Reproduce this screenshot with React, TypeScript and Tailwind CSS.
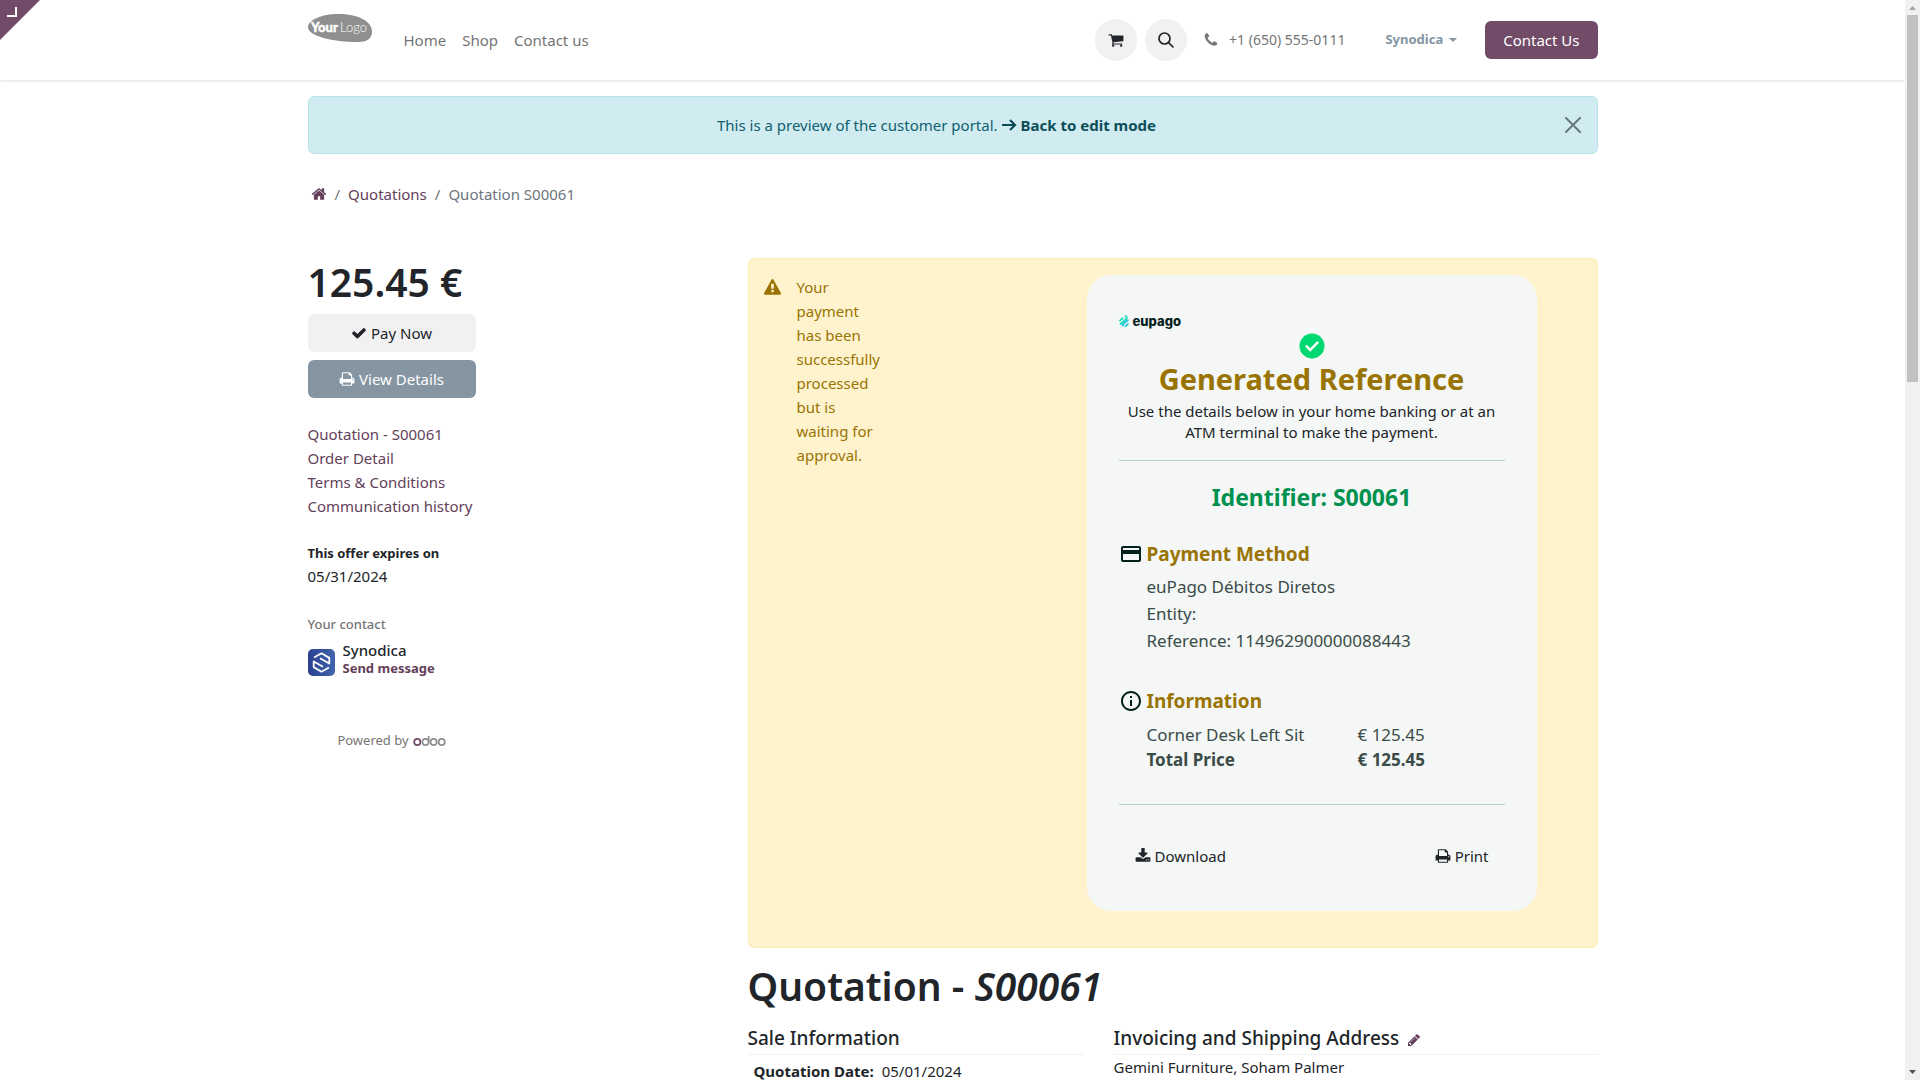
import type { ReactNode } from 'react';
import clsx from 'clsx';

// 1792-unit glyph outlines, Font Awesome 4 grid
const glyphs = {
  cart: 'M704 1536q0 52-38 90t-90 38-90-38-38-90 38-90 90-38 90 38 38 90zm896 0q0 52-38 90t-90 38-90-38-38-90 38-90 90-38 90 38 38 90zm128-1088v512q0 24-16.5 42.5t-40.5 21.5l-1044 122q13 60 13 70 0 16-24 64h920q26 0 45 19t19 45-19 45-45 19h-1024q-26 0-45-19t-19-45q0-11 8-31.5t16-36 21.5-40 15.5-29.5l-177-823h-204q-26 0-45-19t-19-45 19-45 45-19h256q16 0 28.5 6.5t19.5 15.5 13 24.5 8 26 5.5 29.5 4.5 26h1201q26 0 45 19t19 45z',
  phone: 'M1600 1240q0 27-10 70.5t-21 68.5q-21 50-122 106-94 51-186 51-27 0-53-3.5t-57.5-12.5-47-14.5-55.5-20.5-49-18q-98-35-175-83-127-79-264-216t-216-264q-48-77-83-175-3-9-18-49t-20.5-55.5-14.5-47-12.5-57.5-3.5-53q0-92 51-186 56-101 106-122 25-11 68.5-21t70.5-10q14 0 21 3 18 6 53 76 11 19 30 54t35 63.5 31 53.5q3 4 17.5 25t21.5 35.5 7 28.5q0 20-28.5 50t-62 55-62 53-28.5 46q0 9 5 22.5t8.5 20.5 14 24 11.5 19q76 137 174 235t235 174q2 1 19 11.5t24 14 20.5 8.5 22.5 5q18 0 46-28.5t53-62 55-62 50-28.5q14 0 28.5 7t35.5 21.5 25 17.5q25 15 53.5 31t63.5 35 54 30q70 35 76 53 3 7 3 21z',
  home: 'M1472 992v480q0 26-19 45t-45 19h-384v-384h-256v384h-384q-26 0-45-19t-19-45v-480q0-1 .5-3t.5-3l575-474 575 474q1 2 1 6zm223-69l-62 74q-8 9-21 11h-3q-13 0-21-7l-692-577-692 577q-12 8-24 7-13-2-21-11l-62-74q-8-10-7-23.5t11-21.5l719-599q32-26 76-26t76 26l244 204v-195q0-14 9-23t23-9h192q14 0 23 9t9 23v408l219 182q10 8 11 21.5t-7 23.5z',
  print: 'M448 1536h896v-256h-896v256zm0-640h896v-384h-160q-40 0-68-28t-28-68v-160h-640v640zm1152 64q0-26-19-45t-45-19-45 19-19 45 19 45 45 19 45-19 19-45zm128 0v416q0 13-9.5 22.5t-22.5 9.5h-224v160q0 40-28 68t-68 28h-960q-40 0-68-28t-28-68v-160h-224q-13 0-22.5-9.5t-9.5-22.5v-416q0-79 56.5-135.5t135.5-56.5h64v-544q0-40 28-68t68-28h672q40 0 88 20t76 48l152 152q28 28 48 76t20 88v256h64q79 0 135.5 56.5t56.5 135.5z',
  download: 'M1344 1344q0-26-19-45t-45-19-45 19-19 45 19 45 45 19 45-19 19-45zm256 0q0-26-19-45t-45-19-45 19-19 45 19 45 45 19 45-19 19-45zm128-224v320q0 40-28 68t-68 28h-1472q-40 0-68-28t-28-68v-320q0-40 28-68t68-28h465l135 136q58 56 136 56t136-56l136-136h464q40 0 68 28t28 68zm-325-569q17 41-14 70l-448 448q-18 19-45 19t-45-19l-448-448q-31-29-14-70 17-39 59-39h256v-448q0-26 19-45t45-19h256q26 0 45 19t19 45v448h256q42 0 59 39z',
  warning: 'M1024 1375v-190q0-14-9.5-23.5t-22.5-9.5h-192q-13 0-22.5 9.5t-9.5 23.5v190q0 14 9.5 23.5t22.5 9.5h192q13 0 22.5-9.5t9.5-23.5zm-2-374l18-459q0-12-10-19-13-11-24-11h-220q-11 0-24 11-10 7-10 21l17 457q0 10 10 16.5t24 6.5h185q14 0 23.5-6.5t10.5-16.5zm-14-934l768 1408q35 63-2 126-17 29-46.5 46t-63.5 17h-1536q-34 0-63.5-17t-46.5-46q-37-63-2-126l768-1408q17-31 47-49t65-18 65 18 47 49z',
  check: 'M1671 566q0 40-28 68l-724 724-136 136q-28 28-68 28t-68-28l-136-136-362-362q-28-28-28-68t28-68l136-136q28-28 68-28t68 28l294 295 656-657q28-28 68-28t68 28l136 136q28 28 28 68z',
  pencil: 'M491 1536l91-91-235-235-91 91v107h128v128h107zm523-928q0-22-22-22-10 0-17 7l-542 542q-7 7-7 17 0 22 22 22 10 0 17-7l542-542q7-7 7-17zm-54-192l416 416-832 832h-416v-416zm683 96q0 53-37 90l-166 166-416-416 166-165q36-38 90-38 53 0 91 38l235 234q37 39 37 91z',
};

function Glyph({ name, className = 'h-4 w-4' }: { name: keyof typeof glyphs; className?: string }) {
  return (
    <svg viewBox="0 0 1792 1792" fill="currentColor" aria-hidden="true" className={clsx('shrink-0', className)}>
      <path d={glyphs[name]} />
    </svg>
  );
}

const navLinks = ['Home', 'Shop', 'Contact us'];
const sideLinks = ['Quotation - S00061', 'Order Detail', 'Terms & Conditions', 'Communication history'];

function BrandLogo() {
  return (
    <svg viewBox="0 0 64 28" className="h-7 w-16" role="img" aria-label="Your Logo">
      <path d="M0 13C0 6 14 0 30 0c20 0 34 7 34 18 0 7-6 10-14 10C24 28 0 22 0 13z" fill="#8f8f8f" />
      <text x="3" y="18" fill="#fff" stroke="#fff" strokeWidth="0.4" fontSize="13" fontWeight="900" fontFamily="Lato, sans-serif">
        Your
      </text>
      <text x="32" y="18" fill="#fff" fontSize="13" fontWeight="300" fontFamily="Lato, sans-serif">
        Logo
      </text>
    </svg>
  );
}

function Header() {
  return (
    <header className="relative z-10 bg-white shadow-[0_1px_3px_rgba(0,0,0,0.12)]">
      <div className="mx-auto flex h-20 max-w-[1320px] items-center px-[15px]">
        <a href="#" className="mt-3.5 mr-8 self-start">
          <BrandLogo />
        </a>
        <nav className="flex gap-4 text-[15px] text-[#757575]">
          {navLinks.map((label) => (
            <a key={label} href="#">
              {label}
            </a>
          ))}
        </nav>
        <div className="ml-auto flex items-center">
          <button aria-label="Cart" className="mr-2 grid h-[42px] w-[42px] place-items-center rounded-full bg-[#f1f1f1] text-[#212529]">
            <Glyph name="cart" />
          </button>
          <button aria-label="Search" className="mr-4 grid h-[42px] w-[42px] place-items-center rounded-full bg-[#f1f1f1] text-[#212529]">
            <svg viewBox="0 0 16 16" className="h-4 w-4" fill="none" stroke="currentColor" strokeWidth="1.7" strokeLinecap="round">
              <circle cx="6.5" cy="6.5" r="5.5" />
              <path d="M10.6 10.6L15 15" />
            </svg>
          </button>
          <a href="#" className="mr-10 flex items-center gap-2.5 text-sm text-[#757575]">
            <Glyph name="phone" />
            +1 (650) 555-0111
          </a>
          <button className="mr-7 flex items-center gap-1.5 text-[13px] font-bold text-[#8595a2]">
            Synodica
            <svg viewBox="0 0 8 4" className="h-1 w-2" fill="currentColor">
              <path d="M0 0h8L4 4z" />
            </svg>
          </button>
          <button className="h-[38px] rounded-md bg-[#714b67] px-[18px] text-[15px] text-white">Contact Us</button>
        </div>
      </div>
    </header>
  );
}

function PreviewBar() {
  return (
    <div className="mt-4 flex h-[58px] items-center justify-center rounded-md border border-[#b9e3ea] bg-[#d1ecf1] px-4 text-[15px] text-[#0e616e]">
      <span className="ml-auto">This is a preview of the customer portal.</span>
      <a href="#" className="ml-1 flex items-center gap-1 font-bold text-[#0b4e58]">
        <svg viewBox="0 0 15 14" className="h-[14px] w-[15px]" fill="none" stroke="currentColor" strokeWidth="2.2">
          <path d="M0 7h13M8 2l5 5-5 5" />
        </svg>
        Back to edit mode
      </a>
      <button aria-label="Close" className="ml-auto flex w-8 justify-end text-[#68777a]">
        <svg viewBox="0 0 16 16" className="h-4 w-4" fill="none" stroke="currentColor" strokeWidth="2" strokeLinecap="round">
          <path d="M1 1l14 14M15 1L1 15" />
        </svg>
      </button>
    </div>
  );
}

function Breadcrumb() {
  return (
    <nav aria-label="Breadcrumb" className="mt-7 flex h-6 items-center gap-2 text-[15px] text-[#6c757d]">
      <a href="#" aria-label="Home" className="ml-[3px] text-[#633f5a]">
        <Glyph name="home" />
      </a>
      <span>/</span>
      <a href="#" className="text-[#633f5a]">
        Quotations
      </a>
      <span>/</span>
      <span>Quotation S00061</span>
    </nav>
  );
}

function ContactAvatar() {
  return (
    <svg viewBox="0 0 27 27" className="h-[27px] w-[27px] shrink-0" aria-hidden="true">
      <defs>
        <linearGradient id="avatar" x1="0" x2="1">
          <stop offset="0" stopColor="#2a418f" />
          <stop offset="1" stopColor="#4364ad" />
        </linearGradient>
      </defs>
      <rect width="27" height="27" rx="5" fill="url(#avatar)" />
      <g fill="none" stroke="#fff" strokeWidth="1.8" strokeLinejoin="round">
        <path d="M6 8.500l7.500-4.200 7.800 4.600v5.600l-9.300-5.200" />
        <path d="M21 18.500l-7.500 4.200-7.800-4.600v-5.600l9.300 5.200" />
      </g>
    </svg>
  );
}

function Sidebar() {
  return (
    <aside className="w-[168px] shrink-0 text-[15px] text-[#212529]">
      <h2 className="text-[39px] leading-[48px] font-semibold whitespace-nowrap">125.45 €</h2>
      <button className="mt-2 flex h-[38px] w-full items-center justify-center gap-1 rounded-md bg-[#f1f1f1]">
        <Glyph name="check" />
        Pay Now
      </button>
      <button className="mt-2 flex h-[38px] w-full items-center justify-center gap-1 rounded-md bg-[#8595a2] text-white">
        <Glyph name="print" />
        View Details
      </button>
      <ul className="mt-6 leading-6 whitespace-nowrap text-[#633f5a]">
        {sideLinks.map((label) => (
          <li key={label}>
            <a href="#">{label}</a>
          </li>
        ))}
      </ul>
      <div className="mt-6 leading-6">
        <p className="text-[13px] leading-[22px] font-bold">This offer expires on</p>
        <p>05/31/2024</p>
      </div>
      <p className="mt-6 text-[13px] leading-6 font-medium text-[#757575]">Your contact</p>
      <div className="mt-1 flex items-end gap-2">
        <ContactAvatar />
        <div>
          <p className="leading-5 font-medium">Synodica</p>
          <a href="#" className="block text-[13px] leading-4 font-bold text-[#633f5a]">
            Send message
          </a>
        </div>
      </div>
      <p className="mt-[52px] flex items-center justify-center gap-1 text-[13px] leading-6 text-[#757575]">
        Powered by
        <svg viewBox="0 0 33 11" className="h-[11px] w-[33px]" fill="none" stroke="#8f8f8f" strokeWidth="1.7" role="img" aria-label="odoo">
          <circle cx="4.3" cy="7" r="3.100" stroke="#714b67" />
          <circle cx="12.500" cy="7" r="3.100" />
          <path d="M15.700 7V1" />
          <circle cx="20.600" cy="7" r="3.100" />
          <circle cx="28.700" cy="7" r="3.100" />
        </svg>
      </p>
    </aside>
  );
}

function SectionTitle({ icon, children }: { icon: ReactNode; children: ReactNode }) {
  return (
    <h3 className="flex items-center gap-1 text-[19px] leading-[26px] font-bold text-[#997404]">
      <svg viewBox="0 0 24 24" className="h-6 w-6 fill-[#04201c]" aria-hidden="true">
        {icon}
      </svg>
      {children}
    </h3>
  );
}

function PaymentCard() {
  return (
    <section className="mt-4 mr-[60px] mb-9 w-[450px] rounded-3xl bg-[#f4f7f6] px-8 py-9 text-[#212529]">
      <div className="flex h-5 items-center gap-1">
        <svg viewBox="0 0 10 12" className="h-3 w-[10px]" fill="none" stroke="#1fdcc0" strokeWidth="1.9" strokeLinecap="round">
          <path d="M1 5.6l2.6-2.4M1.6 9l5.6-5.1Q8.6 2.4 6.6 1" />
          <path d="M4 10.6q-1-.6.6-2L8.800 5.200M6.700 11l2.200-1.900" stroke="#26c6da" />
        </svg>
        <span className="font-['Inter',sans-serif] text-[13px] leading-5 font-extrabold text-[#04201c]">eupago</span>
      </div>
      <svg viewBox="0 0 24 24" className="mx-auto h-[30px] w-[30px]" aria-hidden="true">
        <circle cx="12" cy="12" r="10" fill="#00d872" />
        <path d="M7.700 12.300l2.900 2.900 5.800-5.900" fill="none" stroke="#fff" strokeWidth="2" strokeLinecap="round" />
      </svg>
      <h2 className="text-center text-[29px] leading-9 font-bold text-[#997404]">Generated Reference</h2>
      <p className="mt-1 text-center text-[15px] leading-[21px]">
        Use the details below in your home banking or at an ATM terminal to make the payment.
      </p>
      <hr className="mt-[17px] border-[#b9cfca]" />
      <p className="mt-5 text-center text-[23px] leading-8 font-bold text-[#00914f]">Identifier: S00061</p>

      <div className="mt-7">
        <SectionTitle icon={<path d="M20 4H4c-1.110 0-2 .89-2 2v12c0 1.110.89 2 2 2h16c1.110 0 2-.89 2-2V6c0-1.110-.89-2-2-2zm0 14H4v-6h16v6zm0-10H4V6h16v2z" />}>
          Payment Method
        </SectionTitle>
        <div className="mt-1.5 pl-7 text-[17px] leading-[27px] text-[#3a4b48]">
          <p>euPago Débitos Diretos</p>
          <p>Entity:</p>
          <p>Reference: 114962900000088443</p>
        </div>
      </div>

      <div className="mt-[34px]">
        <SectionTitle icon={<path d="M11 7h2v2h-2zm0 4h2v6h-2zm1-9C6.480 2 2 6.480 2 12s4.480 10 10 10 10-4.480 10-10S17.520 2 12 2zm0 18c-4.410 0-8-3.590-8-8s3.590-8 8-8 8 3.590 8 8-3.590 8-8 8z" />}>
          Information
        </SectionTitle>
        <table className="mt-2 ml-7 text-left text-[17px] leading-[25px] text-[#3a4b48]">
          <tbody>
            <tr>
              <td className="w-[211px]">Corner Desk Left Sit</td>
              <td>€ 125.45</td>
            </tr>
            <tr className="font-bold">
              <td>Total Price</td>
              <td>€ 125.45</td>
            </tr>
          </tbody>
        </table>
      </div>

      <hr className="mt-8 border-[#b9cfca]" />
      <div className="mt-8 flex justify-between px-4 text-[15px]">
        <button className="flex h-[38px] items-center gap-1">
          <Glyph name="download" />
          Download
        </button>
        <button className="flex h-[38px] items-center gap-1">
          <Glyph name="print" />
          Print
        </button>
      </div>
    </section>
  );
}

function Quotation() {
  return (
    <section className="flex-1">
      <div className="flex items-start rounded-md border border-[#ffecb5] bg-[#fff3cd] pl-[15px] text-[15px] text-[#997404]">
        <Glyph name="warning" className="mt-5 h-[17px] w-[17px]" />
        <p className="mt-4 ml-4 w-22 leading-6">Your payment has been successfully processed but is waiting for approval.</p>
        <div className="ml-auto">
          <PaymentCard />
        </div>
      </div>
      <h1 className="mt-3.5 text-[39px] leading-[48px] font-semibold">
        Quotation - <em>S00061</em>
      </h1>
      <div className="mt-3.5 flex gap-[30px]">
        <div className="w-[336px]">
          <h2 className="border-b border-[#f1f1f1] pb-0.5 text-[19px] leading-7 font-medium">Sale Information</h2>
          <table className="mt-1 ml-[6px] text-left text-[15px] leading-6">
            <tbody>
              <tr>
                <th className="pr-2 font-bold">Quotation Date:</th>
                <td>05/01/2024</td>
              </tr>
            </tbody>
          </table>
        </div>
        <div className="flex-1">
          <h2 className="flex items-center gap-2 border-b border-[#f1f1f1] pb-0.5 text-[19px] leading-7 font-medium">
            Invoicing and Shipping Address
            <a href="#" aria-label="Edit address" className="mt-1 text-[#633f5a]">
              <Glyph name="pencil" className="h-[14px] w-[14px]" />
            </a>
          </h2>
          <address className="text-[15px] leading-6 not-italic">Gemini Furniture, Soham Palmer</address>
        </div>
      </div>
    </section>
  );
}

function ScrollTrack() {
  return (
    <div aria-hidden="true" className="flex w-[15px] shrink-0 flex-col items-center bg-[#f1f1f1]">
      <svg viewBox="0 0 15 15" className="h-[15px] w-[15px] fill-[#a3a3a3]">
        <path d="M4 10h7L7.500 6z" />
      </svg>
      <div className="h-[34%] w-[11px] bg-[#c1c1c1]" />
      <svg viewBox="0 0 15 15" className="mt-auto h-[15px] w-[15px] fill-[#505050]">
        <path d="M4 5h7L7.500 9z" />
      </svg>
    </div>
  );
}

export default function App() {
  return (
    <div className="flex h-screen bg-white font-['Noto_Sans',sans-serif] text-[#212529]">
      <div className="relative flex-1 overflow-y-auto [scrollbar-width:none]">
        <svg viewBox="0 0 40 40" className="absolute top-0 left-0 z-20 h-10 w-10" aria-hidden="true">
          <path d="M0 0h40L0 40z" fill="#714b67" />
          <path d="M7 16h9V7" fill="none" stroke="#fff" strokeWidth="2" />
        </svg>
        <Header />
        <main className="mx-auto max-w-[1320px] px-[15px]">
          <PreviewBar />
          <Breadcrumb />
          <div className="mt-[52px] flex justify-between gap-[272px]">
            <Sidebar />
            <Quotation />
          </div>
        </main>
      </div>
      <ScrollTrack />
    </div>
  );
}
